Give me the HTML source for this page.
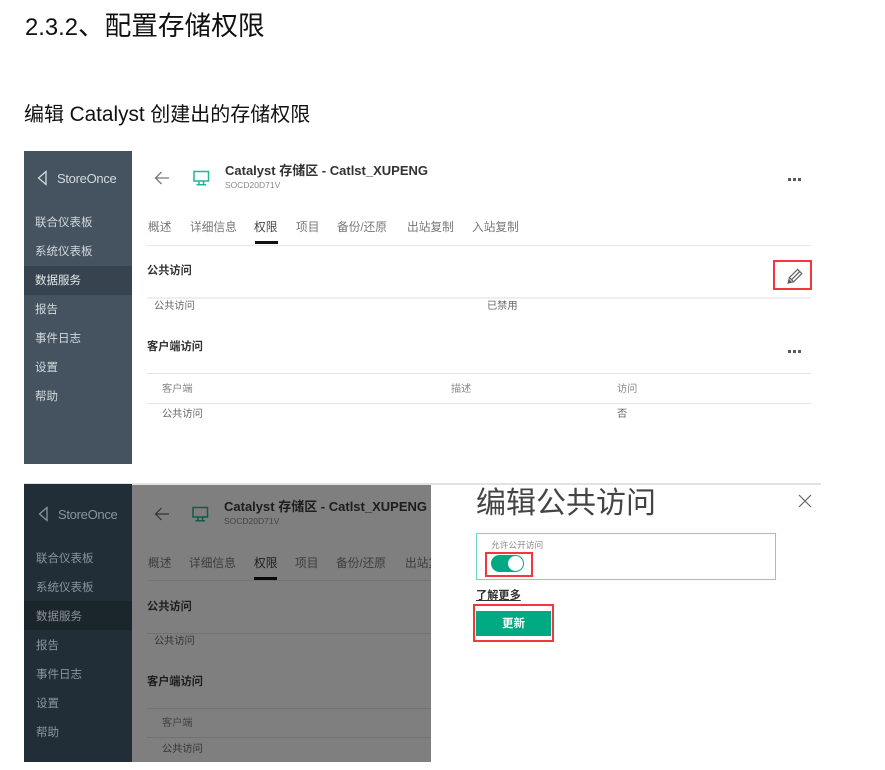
<!DOCTYPE html>
<html lang="zh-CN"><head><meta charset="utf-8">
<style>
html,body{margin:0;padding:0;background:#fff;width:885px;height:770px;overflow:hidden}
body{position:relative;font-family:"Liberation Sans","Noto Sans CJK SC",sans-serif;color:#666}
.w{position:absolute;left:0;top:0;width:885px;height:770px;filter:blur(.3px)}
.t{position:absolute;white-space:nowrap;line-height:1}
.b{position:absolute}
.s{font-size:11.5px;left:35px;color:#d3d9dd}
.s2{font-size:11.5px;left:36px;color:#8c9499}
.tab{font-size:11.7px;color:#777}
.tab2{font-size:11.7px;color:#3c3c3c}
.h{font-size:11.2px;font-weight:bold;color:#333}
.h2{font-size:11.2px;font-weight:bold;color:#1d1d1d}
.c{font-size:10.2px;color:#666}
.c2{font-size:10.2px;color:#333}
.red{position:absolute;border:2px solid #f0383d;box-sizing:border-box}
.d{position:absolute;width:2.5px;height:2.5px;background:#5a5a5a}
</style></head><body>

<div class="t" style="left:25px;top:13px;font-size:26.67px;color:#111"><span style="font-size:23.8px">2.3.2</span>、配置存储权限</div>
<div class="t" style="left:24px;top:105px;font-size:20px;color:#111">编辑 <span style="font-size:20.8px">Catalyst</span> 创建出的存储权限</div>

<div class="w">
<!-- Panel 1 -->
<div class="b" style="left:24px;top:151px;width:108px;height:313px;background:#44535f"></div>
<div class="b" style="left:24px;top:266px;width:108px;height:29px;background:#37444f"></div>
<svg class="b" style="left:36px;top:170px" width="13" height="16" viewBox="0 0 13 16"><path d="M10 1.5 L2.5 8 L10 14.5 Z" fill="none" stroke="#d3d9dd" stroke-width="1.3"/></svg>
<div class="t" style="left:57px;top:172px;font-size:13px;letter-spacing:-.3px;color:#d3d9dd">StoreOnce</div>
<div class="t s" style="top:218px">联合仪表板</div>
<div class="t s" style="top:247px">系统仪表板</div>
<div class="t s" style="top:276px;color:#e4e8ea">数据服务</div>
<div class="t s" style="top:305px">报告</div>
<div class="t s" style="top:334px">事件日志</div>
<div class="t s" style="top:363px">设置</div>
<div class="t s" style="top:392px">帮助</div>

<svg class="b" style="left:154px;top:171px" width="16" height="14" viewBox="0 0 16 14"><path d="M15 7 H1.5 M7.5 1 L1.5 7 L7.5 13" fill="none" stroke="#777" stroke-width="1.3"/></svg>
<svg class="b" style="left:193px;top:170px" width="17" height="16" viewBox="0 0 17 16"><path d="M1 1.5 H15.5 V11 H1 Z M6 11 V14.5 M10.5 11 V14.5 M3.5 14.8 H13" fill="none" stroke="#1fb893" stroke-width="1.5"/></svg>
<div class="t" style="left:225px;top:164px;font-size:13px;font-weight:bold;color:#333">Catalyst 存储区 - Catlst_XUPENG</div>
<div class="t" style="left:225px;top:181px;font-size:8.5px;color:#888">SOCD20D71V</div>
<div class="d" style="left:788px;top:178px"></div><div class="d" style="left:793px;top:178px"></div><div class="d" style="left:798px;top:178px"></div>

<div class="t tab" style="left:148px;top:222px">概述</div>
<div class="t tab" style="left:190px;top:222px">详细信息</div>
<div class="t tab" style="left:254px;top:222px;color:#444">权限</div>
<div class="t tab" style="left:296px;top:222px">项目</div>
<div class="t tab" style="left:337px;top:222px">备份/还原</div>
<div class="t tab" style="left:407px;top:222px">出站复制</div>
<div class="t tab" style="left:472px;top:222px">入站复制</div>
<div class="b" style="left:255px;top:241px;width:23px;height:3px;background:#111"></div>
<div class="b" style="left:147px;top:245px;width:664px;height:1px;background:#e8e8e8"></div>

<div class="t h" style="left:147px;top:266px">公共访问</div>
<div class="b" style="left:147px;top:297px;width:664px;height:2px;background:#eee"></div>
<div class="t c" style="left:154px;top:302px">公共访问</div>
<div class="t c" style="left:487px;top:302px">已禁用</div>
<div class="red" style="left:773px;top:260px;width:39px;height:30px"></div>
<svg class="b" style="left:787px;top:268px" width="16" height="16" viewBox="0 0 16 16"><path d="M1.2 15 L2.4 9.6 L10.6 1.4 L14.8 5.6 L6.6 13.8 Z M2.4 9.6 L6.6 13.8 M4.5 11.7 L12.7 3.5" fill="none" stroke="#6a6a6a" stroke-width="1.3"/><path d="M1.2 15 L2.1 11.4 L4.8 14 Z" fill="#555"/></svg>

<div class="t h" style="left:147px;top:342px">客户端访问</div>
<div class="d" style="left:788px;top:350px"></div><div class="d" style="left:793px;top:350px"></div><div class="d" style="left:798px;top:350px"></div>
<div class="b" style="left:147px;top:373px;width:664px;height:1px;background:#e4e4e4"></div>
<div class="t c" style="left:162px;top:385px;color:#888">客户端</div>
<div class="t c" style="left:451px;top:385px;color:#888">描述</div>
<div class="t c" style="left:617px;top:385px;color:#888">访问</div>
<div class="b" style="left:147px;top:403px;width:664px;height:1px;background:#e4e4e4"></div>
<div class="t c" style="left:162px;top:410px">公共访问</div>
<div class="t c" style="left:617px;top:410px">否</div>

<!-- Panel 2 -->
<div class="b" style="left:24px;top:483px;width:797px;height:2px;background:#e2e2e2"></div>
<div class="b" style="left:24px;top:484px;width:108px;height:278px;background:#222e37"></div>
<div class="b" style="left:24px;top:601px;width:108px;height:29px;background:#1b252c"></div>
<div class="b" style="left:132px;top:485px;width:299px;height:277px;background:#7f7f7f"></div>
<svg class="b" style="left:37px;top:506px" width="13" height="16" viewBox="0 0 13 16"><path d="M10 1.5 L2.5 8 L10 14.5 Z" fill="none" stroke="#8c9499" stroke-width="1.3"/></svg>
<div class="t" style="left:58px;top:508px;font-size:13px;letter-spacing:-.3px;color:#8c9499">StoreOnce</div>
<div class="t s2" style="top:554px">联合仪表板</div>
<div class="t s2" style="top:583px">系统仪表板</div>
<div class="t s2" style="top:612px">数据服务</div>
<div class="t s2" style="top:641px">报告</div>
<div class="t s2" style="top:670px">事件日志</div>
<div class="t s2" style="top:699px">设置</div>
<div class="t s2" style="top:728px">帮助</div>

<svg class="b" style="left:154px;top:507px" width="16" height="14" viewBox="0 0 16 14"><path d="M15 7 H1.5 M7.5 1 L1.5 7 L7.5 13" fill="none" stroke="#333" stroke-width="1.2"/></svg>
<svg class="b" style="left:192px;top:506px" width="17" height="16" viewBox="0 0 17 16"><path d="M1 1.5 H15.5 V11 H1 Z M6 11 V14.5 M10.5 11 V14.5 M3.5 14.8 H13" fill="none" stroke="#0f5c4a" stroke-width="1.5"/></svg>
<div class="b" style="left:132px;top:485px;width:299px;height:277px;overflow:hidden">
<div class="t" style="left:92px;top:15px;font-size:13px;font-weight:bold;color:#1d1d1d">Catalyst 存储区 - Catlst_XUPENG</div>
<div class="t" style="left:92px;top:32px;font-size:8.5px;color:#444">SOCD20D71V</div>
<div class="t tab2" style="left:16px;top:73px">概述</div>
<div class="t tab2" style="left:57px;top:73px">详细信息</div>
<div class="t tab2" style="left:122px;top:73px;color:#1d1d1d">权限</div>
<div class="t tab2" style="left:163px;top:73px">项目</div>
<div class="t tab2" style="left:204px;top:73px">备份/还原</div>
<div class="t tab2" style="left:273px;top:73px">出站复制</div>
<div class="b" style="left:122px;top:92px;width:23px;height:3px;background:#0a0a0a"></div>
<div class="b" style="left:15px;top:95px;width:284px;height:1px;background:#747474"></div>
<div class="t h2" style="left:15px;top:117px">公共访问</div>
<div class="b" style="left:15px;top:148px;width:284px;height:1px;background:#727272"></div>
<div class="t c2" style="left:22px;top:152px">公共访问</div>
<div class="t h2" style="left:15px;top:192px">客户端访问</div>
<div class="b" style="left:15px;top:223px;width:284px;height:1px;background:#727272"></div>
<div class="t c2" style="left:30px;top:234px;color:#444">客户端</div>
<div class="b" style="left:15px;top:252px;width:284px;height:1px;background:#727272"></div>
<div class="t c2" style="left:30px;top:260px">公共访问</div>
</div>

<div class="t" style="left:476px;top:489px;font-size:30px;color:#444">编辑公共访问</div>
<svg class="b" style="left:797px;top:493px" width="16" height="16" viewBox="0 0 16 16"><path d="M2 2 L14 14 M14 2 L2 14" stroke="#666" stroke-width="1.2" fill="none"/></svg>
<div class="b" style="left:476px;top:533px;width:300px;height:47px;box-sizing:border-box;border:1px solid #72d6cc"></div>
<div class="t" style="left:491px;top:541px;font-size:8.7px;color:#888">允许公开访问</div>
<div class="red" style="left:485px;top:552px;width:48px;height:25px"></div>
<div class="b" style="left:491px;top:555px;width:33px;height:17px;border-radius:9px;background:#01a982"></div>
<div class="b" style="left:508px;top:556px;width:15px;height:15px;border-radius:50%;background:#fff"></div>
<div class="t" style="left:476px;top:591px;font-size:11.2px;font-weight:bold;color:#333;text-decoration:underline">了解更多</div>
<div class="red" style="left:473px;top:604px;width:81px;height:38px"></div>
<div class="b" style="left:476px;top:611px;width:75px;height:25px;background:#01a982"></div>
<div class="t" style="left:502px;top:619px;font-size:11.5px;font-weight:bold;color:#fff">更新</div>
</div>

</body></html>
